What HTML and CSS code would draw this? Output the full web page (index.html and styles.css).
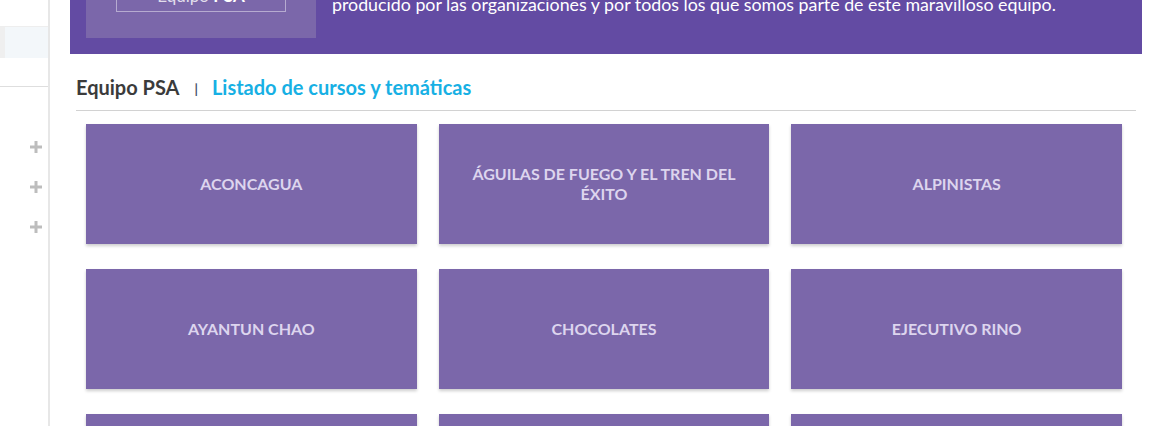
FILE: index.html
```html
<!DOCTYPE html>
<html lang="es">
<head>
<meta charset="utf-8">
<title>Equipo PSA</title>
<link rel="stylesheet" href="styles.css">
</head>
<body>
<div class="page">
  <aside class="sidebar">
    <div class="side-top"></div>
    <div class="side-active"><span class="side-mark"></span></div>
    <div class="side-gap"></div>
    <ul class="side-list">
      <li><svg class="plus" viewBox="0 0 12 12" width="12" height="12"><rect x="4.5" y="0" width="3" height="12" fill="#bdbdbd"/><rect x="0" y="4.5" width="12" height="3" fill="#bdbdbd"/></svg></li>
      <li><svg class="plus" viewBox="0 0 12 12" width="12" height="12"><rect x="4.5" y="0" width="3" height="12" fill="#bdbdbd"/><rect x="0" y="4.5" width="12" height="3" fill="#bdbdbd"/></svg></li>
      <li><svg class="plus" viewBox="0 0 12 12" width="12" height="12"><rect x="4.5" y="0" width="3" height="12" fill="#bdbdbd"/><rect x="0" y="4.5" width="12" height="3" fill="#bdbdbd"/></svg></li>
    </ul>
  </aside>
  <main class="main">
    <section class="banner">
      <div class="banner-img">
        <div class="banner-logo"><span>Equipo <b>PSA</b></span></div>
      </div>
      <p class="banner-text">producido por las organizaciones y por todos los que somos parte de este maravilloso equipo.</p>
    </section>
    <header class="crumbs">
      <span class="crumb-main">Equipo PSA</span>
      <span class="crumb-sep">|</span>
      <span class="crumb-link">Listado de cursos y temáticas</span>
    </header>
    <div class="grid">
      <div class="card">ACONCAGUA</div>
      <div class="card">ÁGUILAS DE FUEGO Y EL TREN DEL ÉXITO</div>
      <div class="card">ALPINISTAS</div>
      <div class="card">AYANTUN CHAO</div>
      <div class="card">CHOCOLATES</div>
      <div class="card">EJECUTIVO RINO</div>
      <div class="card"></div>
      <div class="card"></div>
      <div class="card"></div>
    </div>
  </main>
</div>
</body>
</html>
```
FILE: styles.css
```css
html, body {
  margin: 0;
  padding: 0;
  background: #ffffff;
  height: 100%;
  overflow: hidden;
}
body {
  font-family: Lato, "Open Sans", "Liberation Sans", sans-serif;
}
.page {
  display: flex;
  height: 426px;
  overflow: hidden;
}
.sidebar {
  width: 48px;
  flex: 0 0 48px;
  border-right: 2px solid #e7e7e7;
  display: flex;
  flex-direction: column;
}
.side-top {
  height: 26px;
  border-bottom: 1px solid #eeeeee;
}
.side-active {
  height: 31px;
  background: #f3f7fa;
  display: flex;
}
.side-mark {
  width: 5px;
  background: #efefef;
}
.side-gap {
  height: 28px;
  border-bottom: 1px solid #dedede;
}
.side-list {
  list-style: none;
  margin: 0;
  padding: 40px 0 0 0;
}
.side-list li {
  height: 40px;
  display: flex;
  justify-content: flex-end;
  padding-right: 6px;
  align-items: flex-start;
  padding-top: 14px;
  box-sizing: border-box;
}
.plus {
  display: block;
}
.main {
  flex: 1;
  padding: 0 14px 0 20px;
  min-width: 0;
}
.banner {
  background: #634ba3;
  height: 54px;
  overflow: hidden;
  display: flex;
  padding-left: 16px;
}
.banner-img {
  width: 230px;
  height: 38px;
  background: #7b67aa;
  display: flex;
  justify-content: center;
  flex: 0 0 230px;
}
.banner-logo {
  width: 170px;
  height: 30px;
  margin-top: -18px;
  border: 1px solid rgba(255, 255, 255, 0.45);
  display: flex;
  align-items: flex-end;
  justify-content: center;
  color: rgba(255, 255, 255, 0.8);
  font-size: 17px;
  line-height: 18px;
  padding-bottom: 6px;
  box-sizing: border-box;
}
.banner-logo b {
  color: #ffffff;
}
.banner-text {
  margin: -7px 0 0 16px;
  color: #ffffff;
  font-size: 17.8px;
  line-height: 22px;
  white-space: nowrap;
}
.crumbs {
  margin: 0 6px;
  height: 57px;
  border-bottom: 1px solid #d2d2d2;
  display: flex;
  align-items: center;
  padding-top: 10px;
  box-sizing: border-box;
  font-size: 20px;
  font-weight: 700;
}
.crumb-main {
  color: #3b3b3b;
}
.crumb-sep {
  color: #3e4a66;
  font-size: 13px;
  font-weight: 700;
  margin: 4px 14px 0 15px;
}
.crumb-link {
  color: #17b0e4;
}
.grid {
  display: grid;
  grid-template-columns: repeat(3, 1fr);
  column-gap: 22px;
  row-gap: 25px;
  padding: 13px 20px 0 16px;
}
.card {
  height: 120px;
  background: #7b67aa;
  box-shadow: 0 2px 3px rgba(0, 0, 0, 0.2);
  color: #ddd5ee;
  font-size: 16px;
  font-weight: 700;
  line-height: 20px;
  text-align: center;
  display: flex;
  align-items: center;
  justify-content: center;
  padding: 0 30px;
  box-sizing: border-box;
}
```
